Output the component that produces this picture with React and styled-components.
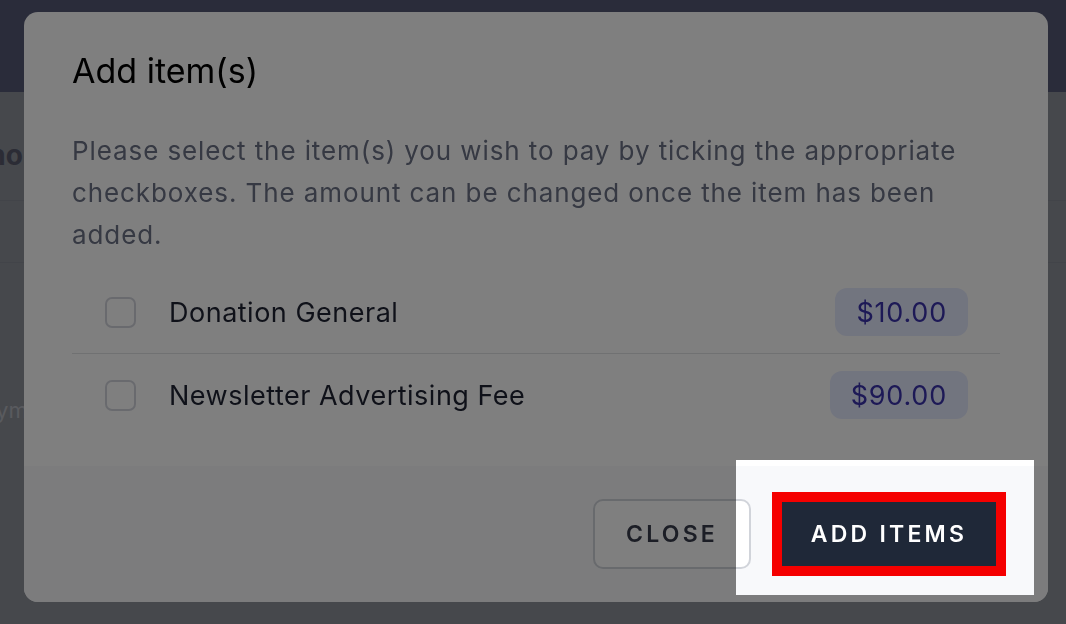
import React from "react";
import styled, { createGlobalStyle } from "styled-components";

const GlobalStyle = createGlobalStyle`
    html, body {
        margin: 0;
        padding: 0;
        overflow: hidden;
    }
    body {
        font-family: Inter, "Noto Sans", "Liberation Sans", sans-serif;
    }
`;

const Page = styled.div`
    position: relative;
    width: 100vw;
    height: 100vh;
    overflow: hidden;
    background-color: #8c9099;
`;

const TopBar = styled.header`
    height: 92px;
    background-color: #545874;
`;

const PageBody = styled.main`
    margin-left: -30px;
    padding-top: 45px;
`;

const PageHeading = styled.h2`
    margin: 0;
    padding-bottom: 27px;
    font-size: 28px;
    line-height: 36px;
    font-weight: 700;
    color: #56596a;
    border-bottom: 1px solid #858992;
`;

const PageRow = styled.div`
    height: 61px;
    border-bottom: 1px solid #858992;
`;

const PageText = styled.p`
    margin: 132px 0 0;
    font-size: 22px;
    line-height: 30px;
    color: #b2b5bd;
`;

const Backdrop = styled.div`
    position: fixed;
    inset: 0;
    display: flex;
    justify-content: flex-start;
    align-items: flex-start;
    padding: 12px 0 0 24px;
`;

const Modal = styled.div`
    width: 1024px;
    background-color: #ffffff;
    border-radius: 14px;
    overflow: hidden;
    display: flex;
    flex-direction: column;
`;

const ModalBody = styled.div`
    padding: 38px 48px 30px;
`;

const Title = styled.h3`
    margin: 0;
    font-size: 34px;
    line-height: 42px;
    font-weight: 400;
    color: #000000;
`;

const Description = styled.p`
    margin: 38px 0 15px;
    font-size: 26px;
    line-height: 42px;
    letter-spacing: 0.9px;
    color: #6c7286;
`;

const ItemList = styled.div`
    display: flex;
    flex-direction: column;
`;

const ItemRow = styled.label`
    height: 82px;
    display: flex;
    align-items: center;
    gap: 33px;
    padding: 0 32px 0 33px;
    border-bottom: ${(props) => (props.last ? "none" : "1px solid #e1e2e5")};
`;

const Checkbox = styled.span`
    width: 31px;
    height: 31px;
    box-sizing: border-box;
    border: 2px solid #d3d5dd;
    border-radius: 7px;
    background-color: #ffffff;
    flex-shrink: 0;
`;

const ItemName = styled.span`
    flex: 1;
    font-size: 27px;
    letter-spacing: 0.5px;
    color: #1f2333;
`;

const Price = styled.span`
    height: 48px;
    display: flex;
    align-items: center;
    padding: 0 21px;
    border-radius: 12px;
    background-color: #e5eaff;
    color: #3a32ad;
    font-size: 27px;
    letter-spacing: 0.8px;
`;

const Footer = styled.div`
    height: 136px;
    background-color: #f8f9fb;
    display: flex;
    justify-content: flex-end;
    align-items: center;
    gap: 31px;
    padding: 0 52px;
`;

const Button = styled.button`
    height: ${(props) => (props.primary ? "64px" : "70px")};
    width: ${(props) => (props.primary ? "214px" : "158px")};
    box-sizing: border-box;
    border-radius: ${(props) => (props.primary ? "0" : "10px")};
    border: ${(props) => (props.primary ? "none" : "2px solid #d1d4da")};
    background-color: ${(props) => (props.primary ? "#1f2838" : "#ffffff")};
    color: ${(props) => (props.primary ? "#ffffff" : "#393d4c")};
    outline: ${(props) => (props.primary ? "10px solid #f50000" : "none")};
    font-family: inherit;
    font-size: 23px;
    font-weight: 600;
    letter-spacing: 0.14em;
    padding: 0;
    cursor: pointer;
`;

const Spotlight = styled.div`
    position: fixed;
    top: 460px;
    left: 736px;
    width: 298px;
    height: 135px;
    box-shadow: 0 0 0 3000px rgba(0, 0, 0, 0.5);
    pointer-events: none;
`;

const items = [
    { name: "Donation General", price: "$10.00" },
    { name: "Newsletter Advertising Fee", price: "$90.00" },
];

export default function App() {
    return (
        <>
            <GlobalStyle />
            <Page>
                <TopBar />
                <PageBody>
                    <PageHeading>Shop</PageHeading>
                    <PageRow />
                    <PageText>Payment</PageText>
                </PageBody>
                <Backdrop>
                    <Modal>
                        <ModalBody>
                            <Title>Add item(s)</Title>
                            <Description>
                                Please select the item(s) you wish to pay by
                                ticking the appropriate checkboxes. The amount
                                can be changed once the item has been added.
                            </Description>
                            <ItemList>
                                {items.map((item, i) => (
                                    <ItemRow
                                        key={item.name}
                                        last={i === items.length - 1}
                                    >
                                        <Checkbox />
                                        <ItemName>{item.name}</ItemName>
                                        <Price>{item.price}</Price>
                                    </ItemRow>
                                ))}
                            </ItemList>
                        </ModalBody>
                        <Footer>
                            <Button>CLOSE</Button>
                            <Button primary>ADD ITEMS</Button>
                        </Footer>
                    </Modal>
                </Backdrop>
                <Spotlight />
            </Page>
        </>
    );
}
